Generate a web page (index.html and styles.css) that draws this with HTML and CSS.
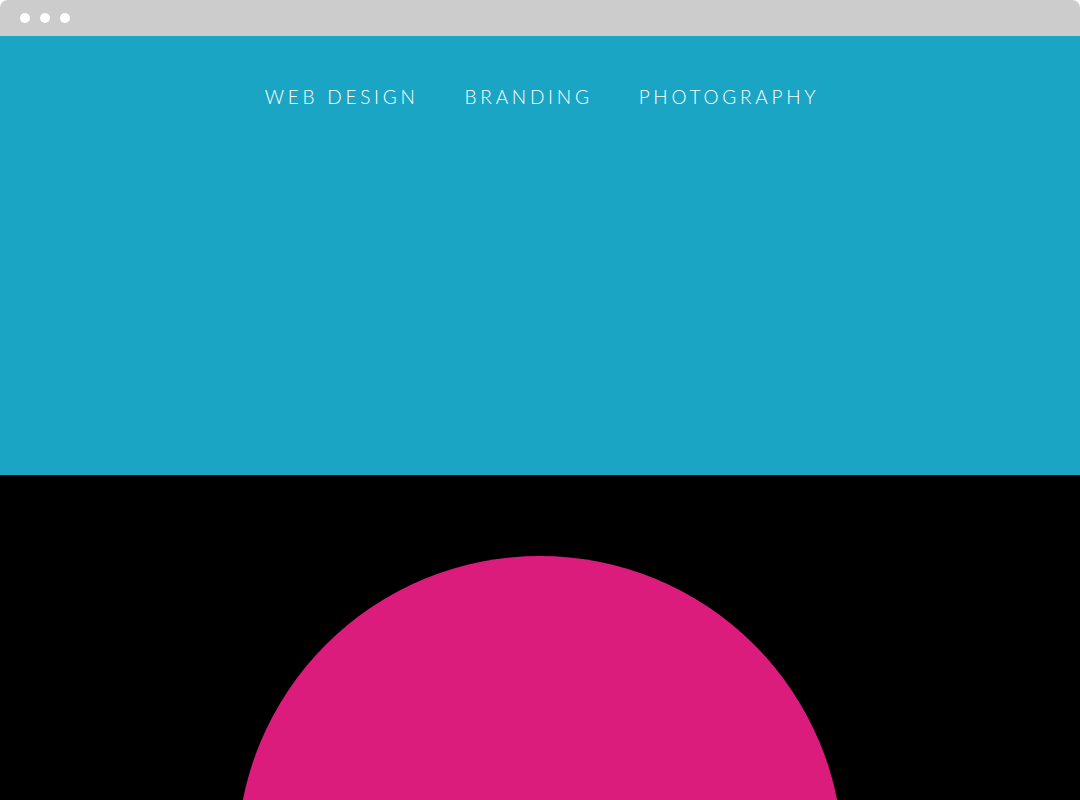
FILE: index.html
```html
<!DOCTYPE html>
<html>
<head>
<meta charset="utf-8">
<link rel="stylesheet" href="styles.css">
</head>
<body>
<div class="window">
  <div class="chrome">
    <span class="dot"></span><span class="dot"></span><span class="dot"></span>
  </div>
  <header class="hero">
    <nav class="nav">
      <a class="nav-link">WEB DESIGN</a>
      <a class="nav-link">BRANDING</a>
      <a class="nav-link">PHOTOGRAPHY</a>
    </nav>
  </header>
  <section class="dark">
    <div class="circle"></div>
  </section>
</div>
</body>
</html>
```

FILE: styles.css
```css
html, body {
  margin: 0;
  padding: 0;
  background: #ffffff;
  height: 800px;
  overflow: hidden;
}
.window {
  width: 1080px;
  height: 800px;
  display: flex;
  flex-direction: column;
  overflow: hidden;
}
.chrome {
  height: 36px;
  flex: none;
  background: #cccccc;
  border-radius: 8px 8px 0 0;
  display: flex;
  align-items: center;
  gap: 10px;
  padding-left: 20px;
  box-sizing: border-box;
}
.dot {
  width: 10px;
  height: 10px;
  border-radius: 50%;
  background: #ffffff;
}
.hero {
  height: 439px;
  flex: none;
  background: #1ba5c4;
  display: flex;
  justify-content: center;
  padding-top: 49px;
  box-sizing: border-box;
}
.nav {
  display: flex;
  gap: 46px;
  height: 24px;
  align-items: center;
  margin-left: 4px;
}
.nav-link {
  font-family: Lato, "Noto Sans", sans-serif;
  font-size: 19px;
  font-weight: 300;
  letter-spacing: 3.75px;
  color: #ffffff;
  line-height: 24px;
}
.dark {
  flex: 1;
  background: #000000;
  display: flex;
  justify-content: center;
  padding-top: 81px;
  overflow: hidden;
}
.circle {
  width: 606px;
  height: 606px;
  flex: none;
  border-radius: 50%;
  background: #db1c7c;
}
```
